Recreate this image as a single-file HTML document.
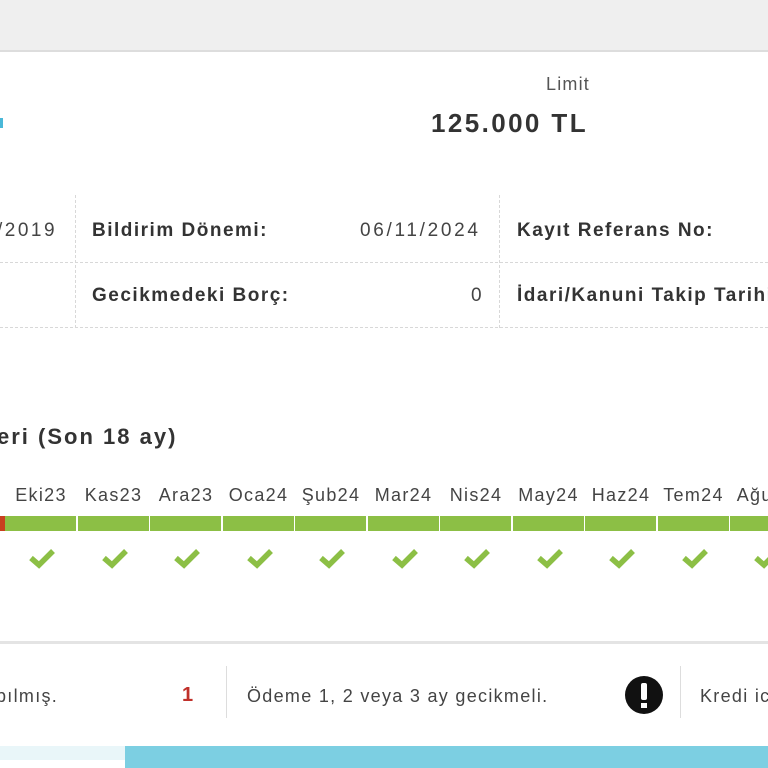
<!DOCTYPE html>
<html><head><meta charset="utf-8"><style>
*{margin:0;padding:0;box-sizing:border-box}
body{width:768px;height:768px;overflow:hidden;background:#fff;font-family:"Liberation Sans",sans-serif;color:#333;position:relative}
.a{position:absolute;white-space:nowrap}
.top{left:0;top:0;width:768px;height:52px;background:#efefef;border-bottom:2px solid #ddd}
.b{font-weight:bold;font-size:19px;color:#333;letter-spacing:1.5px}
.n{font-size:19px;color:#444;letter-spacing:2.5px}
.hl{height:0;border-top:1px dashed #d8d8d8}
.vl{width:0;border-left:1px dashed #d8d8d8}
.m{font-size:18px;color:#444;text-align:center;width:72px;letter-spacing:1.3px}
.seg{top:516px;height:15px;width:71px;background:#8cbf45}
.ck{top:546px;width:30px;height:24px}
</style></head><body>
<div class="a top"></div>
<div class="a" style="left:0;top:118px;width:3px;height:10px;background:#4ab8d8"></div>
<div class="a n" style="left:546px;top:74px;font-size:18px;color:#555;letter-spacing:1.2px">Limit</div>
<div class="a b" style="left:431px;top:108px;font-size:26px;letter-spacing:2.4px">125.000 TL</div>

<div class="a hl" style="left:0;top:262px;width:768px"></div>
<div class="a hl" style="left:0;top:327px;width:768px"></div>
<div class="a vl" style="left:75px;top:195px;height:133px"></div>
<div class="a vl" style="left:499px;top:195px;height:133px"></div>
<div class="a n" style="left:-3px;top:220px">/2019</div>
<div class="a b" style="left:92px;top:220px">Bildirim Dönemi:</div>
<div class="a n" style="left:360px;top:220px;letter-spacing:2.7px">06/11/2024</div>
<div class="a b" style="left:517px;top:220px">Kayıt Referans No:</div>
<div class="a b" style="left:92px;top:285px">Gecikmedeki Borç:</div>
<div class="a n" style="left:471px;top:285px">0</div>
<div class="a b" style="left:517px;top:285px">İdari/Kanuni Takip Tarihi</div>

<div class="a b" style="left:-3px;top:424px;font-size:22px;letter-spacing:2px">eri (Son 18 ay)</div>

<div class="a" style="left:0;top:516px;width:5px;height:15px;background:#c8401f"></div>
<div id="months"></div>
<script>
var ms=["Eki23","Kas23","Ara23","Oca24","Şub24","Mar24","Nis24","May24","Haz24","Tem24","Ağu24"];
var h="";
for(var i=0;i<ms.length;i++){var x=5+i*72.5;
h+='<div class="a m" style="left:'+(x)+'px;top:485px">'+ms[i]+'</div>';
h+='<div class="a seg" style="left:'+x+'px"></div>';
h+='<svg class="a ck" style="left:'+(x+22)+'px" viewBox="0 0 30 24"><path d="M4 12 L12 19 L26 5" fill="none" stroke="#8cbf45" stroke-width="5.5"/></svg>';}
document.getElementById("months").innerHTML=h;
</script>

<div class="a" style="left:0;top:641px;width:768px;height:3px;background:#e4e4e4"></div>
<div class="a n" style="left:-4px;top:686px;font-size:18px;letter-spacing:1.3px">bılmış.</div>
<div class="a b" style="left:182px;top:684px;color:#c0302a;font-size:20px">1</div>
<div class="a" style="left:226px;top:666px;width:1px;height:52px;background:#ddd"></div>
<div class="a n" style="left:247px;top:686px;font-size:18px;letter-spacing:1.3px">Ödeme 1, 2 veya 3 ay gecikmeli.</div>
<div class="a" style="left:625px;top:676px;width:38px;height:38px;border-radius:50%;background:#111"></div>
<div class="a" style="left:641px;top:683px;width:6px;height:17px;background:#fff;border-radius:2px"></div>
<div class="a" style="left:641px;top:703px;width:6px;height:5px;background:#fff"></div>
<div class="a" style="left:680px;top:666px;width:1px;height:52px;background:#ddd"></div>
<div class="a n" style="left:700px;top:686px;font-size:18px;letter-spacing:1.3px">Kredi ic</div>
<div class="a" style="left:0;top:746px;width:768px;height:22px;background:#7ccfe2"></div>
<div class="a" style="left:0;top:746px;width:125px;height:14px;background:#e9f6f9"></div>
<div class="a" style="left:0;top:760px;width:125px;height:8px;background:#fff"></div>
</body></html>
